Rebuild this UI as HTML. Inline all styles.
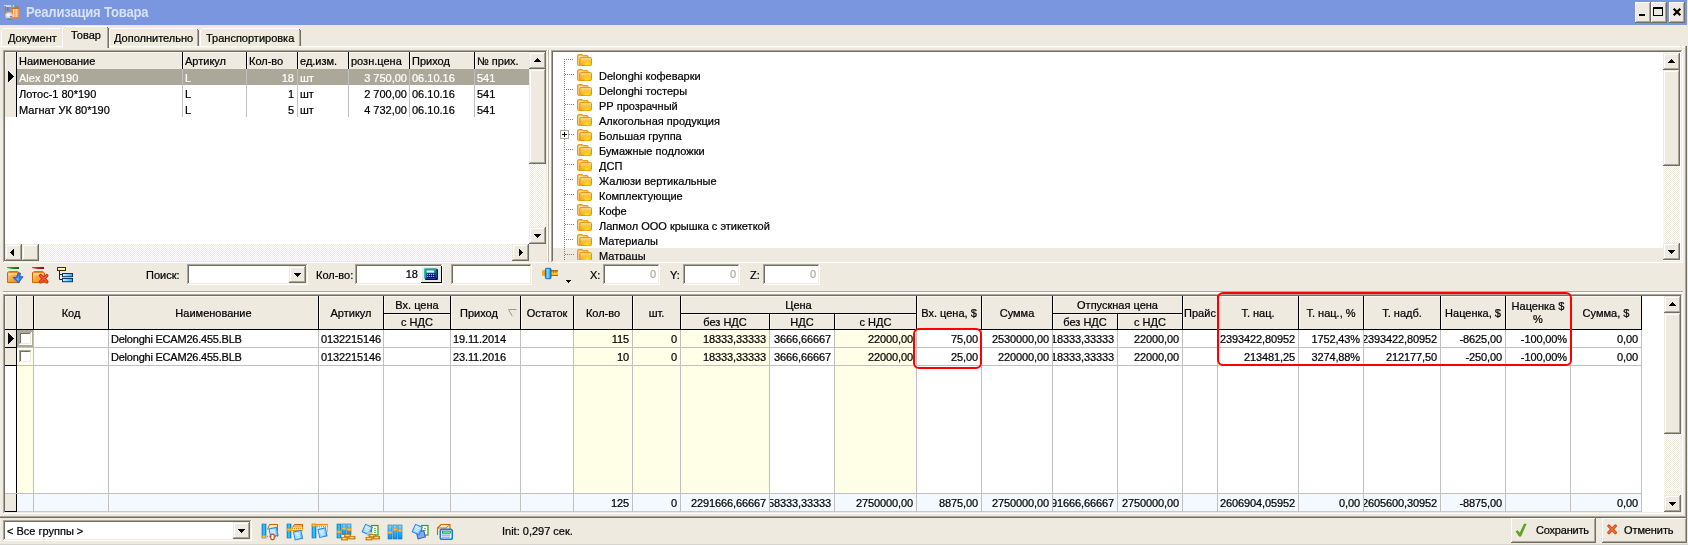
<!DOCTYPE html>
<html><head><meta charset="utf-8"><title>Реализация Товара</title>
<style>
html,body{margin:0;padding:0;}
body{width:1688px;height:545px;overflow:hidden;background:#EEEADF;position:relative;font-family:"Liberation Sans",sans-serif;font-size:11px;color:#000;}
div{position:absolute;box-sizing:border-box;}
.t{white-space:nowrap;overflow:hidden;font-size:11px;-webkit-text-stroke-width:0.22px;}
svg{position:absolute;overflow:visible;}
</style></head><body><div id="root" style="left:0;top:0;width:1688px;height:545px;will-change:transform;">

<div style="left:0px;top:0px;width:1687px;height:25px;background:#7A96DF;"></div>
<div style="left:0px;top:25px;width:1px;height:520px;background:#F3EDE8;"></div>
<svg style="left:4px;top:4px" width="16" height="16" viewBox="0 0 16 16">
<rect x="0" y="1" width="10" height="2" fill="#c8d4f4"/><rect x="7" y="1" width="2" height="2" fill="#6bc36b"/>
<rect x="0.5" y="2" width="1.5" height="7" fill="#8a8474"/><rect x="3" y="3" width="1.5" height="6" fill="#7a7868"/>
<rect x="0" y="7" width="8" height="1.5" fill="#b08a7a"/>
<rect x="11" y="2" width="4" height="2" fill="#8a8a6a"/>
<rect x="7.5" y="4" width="7.5" height="10.5" fill="#e88a30"/><rect x="9" y="5" width="1.5" height="8" fill="#f6d8b8"/><rect x="11.5" y="5" width="1.2" height="8" fill="#fbe6cf"/><rect x="13.2" y="5" width="1" height="8" fill="#c7c7d7"/>
<rect x="7.5" y="4" width="7.5" height="1" fill="#d0701c"/>
<ellipse cx="5" cy="11.5" rx="3.7" ry="3.3" fill="#d8d8d8"/><ellipse cx="4.5" cy="11" rx="2" ry="1.6" fill="#f4f4f4"/><rect x="6" y="12" width="2" height="1.5" fill="#5a86d8"/>
<rect x="3" y="14.5" width="4.5" height="1" fill="#6c6c5c"/>
</svg>
<div style="left:26px;top:4px;height:18px;line-height:18px;white-space:nowrap;font-size:13px;font-weight:bold;color:#D8E3F8;letter-spacing:-0.16px;transform:scaleY(1.06);transform-origin:0 14px;" id="ttl">Реализация Товара</div>
<div style="left:1635px;top:2px;width:16px;height:21px;background:#EEEADF;"></div>
<div style="left:1635px;top:2px;width:16px;height:1px;background:#FFFFFF;"></div>
<div style="left:1635px;top:2px;width:1px;height:21px;background:#FFFFFF;"></div>
<div style="left:1636px;top:3px;width:14px;height:1px;background:#EEEADF;"></div>
<div style="left:1636px;top:3px;width:1px;height:19px;background:#EEEADF;"></div>
<div style="left:1636px;top:21px;width:14px;height:1px;background:#ACA899;"></div>
<div style="left:1649px;top:3px;width:1px;height:19px;background:#ACA899;"></div>
<div style="left:1635px;top:22px;width:16px;height:1px;background:#716F64;"></div>
<div style="left:1650px;top:2px;width:1px;height:21px;background:#716F64;"></div>
<div style="left:1651px;top:2px;width:16px;height:21px;background:#EEEADF;"></div>
<div style="left:1651px;top:2px;width:16px;height:1px;background:#FFFFFF;"></div>
<div style="left:1651px;top:2px;width:1px;height:21px;background:#FFFFFF;"></div>
<div style="left:1652px;top:3px;width:14px;height:1px;background:#EEEADF;"></div>
<div style="left:1652px;top:3px;width:1px;height:19px;background:#EEEADF;"></div>
<div style="left:1652px;top:21px;width:14px;height:1px;background:#ACA899;"></div>
<div style="left:1665px;top:3px;width:1px;height:19px;background:#ACA899;"></div>
<div style="left:1651px;top:22px;width:16px;height:1px;background:#716F64;"></div>
<div style="left:1666px;top:2px;width:1px;height:21px;background:#716F64;"></div>
<div style="left:1669px;top:2px;width:16px;height:21px;background:#EEEADF;"></div>
<div style="left:1669px;top:2px;width:16px;height:1px;background:#FFFFFF;"></div>
<div style="left:1669px;top:2px;width:1px;height:21px;background:#FFFFFF;"></div>
<div style="left:1670px;top:3px;width:14px;height:1px;background:#EEEADF;"></div>
<div style="left:1670px;top:3px;width:1px;height:19px;background:#EEEADF;"></div>
<div style="left:1670px;top:21px;width:14px;height:1px;background:#ACA899;"></div>
<div style="left:1683px;top:3px;width:1px;height:19px;background:#ACA899;"></div>
<div style="left:1669px;top:22px;width:16px;height:1px;background:#716F64;"></div>
<div style="left:1684px;top:2px;width:1px;height:21px;background:#716F64;"></div>
<div style="left:1639px;top:14px;width:6px;height:2px;background:#000;"></div>
<div style="left:1653px;top:7px;width:10px;height:9px;border:1px solid #000;border-top:2px solid #000;"></div>
<svg style="left:1673px;top:8px" width="8" height="8" viewBox="0 0 8 8"><path d="M0.7 0.7 L7.3 7.3 M7.3 0.7 L0.7 7.3" stroke="#000" stroke-width="2.2" fill="none"/></svg>
<div style="left:0px;top:46px;width:1685px;height:1px;background:#FFFFFF;"></div>
<div style="left:0px;top:47px;width:1685px;height:1px;background:#F3F0E8;"></div>
<div style="left:1685px;top:46px;width:1px;height:472px;background:#ACA899;"></div>
<div style="left:1686px;top:46px;width:1px;height:472px;background:#716F64;"></div>
<div style="left:1px;top:28px;width:61px;height:18px;background:#EEEBDC;"></div>
<div style="left:3px;top:28px;width:57px;height:1px;background:#FFFFFF;"></div>
<div style="left:1px;top:30px;width:1px;height:16px;background:#FFFFFF;"></div>
<div style="left:2px;top:29px;width:1px;height:1px;background:#FFFFFF;"></div>
<div class="t" style="left:8px;top:31px;width:61px;height:15px;line-height:15px;text-align:left;color:#000;">Документ</div>
<div style="left:109px;top:28px;width:90px;height:18px;background:#EEEBDC;"></div>
<div style="left:111px;top:28px;width:86px;height:1px;background:#FFFFFF;"></div>
<div style="left:109px;top:30px;width:1px;height:16px;background:#FFFFFF;"></div>
<div style="left:110px;top:29px;width:1px;height:1px;background:#FFFFFF;"></div>
<div style="left:197px;top:30px;width:1px;height:16px;background:#ACA899;"></div>
<div style="left:198px;top:30px;width:1px;height:16px;background:#716F64;"></div>
<div style="left:197px;top:29px;width:1px;height:1px;background:#716F64;"></div>
<div class="t" style="left:114px;top:31px;width:90px;height:15px;line-height:15px;text-align:left;color:#000;">Дополнительно</div>
<div style="left:200px;top:28px;width:101px;height:18px;background:#EEEBDC;"></div>
<div style="left:202px;top:28px;width:97px;height:1px;background:#FFFFFF;"></div>
<div style="left:200px;top:30px;width:1px;height:16px;background:#FFFFFF;"></div>
<div style="left:201px;top:29px;width:1px;height:1px;background:#FFFFFF;"></div>
<div style="left:299px;top:30px;width:1px;height:16px;background:#ACA899;"></div>
<div style="left:300px;top:30px;width:1px;height:16px;background:#716F64;"></div>
<div style="left:299px;top:29px;width:1px;height:1px;background:#716F64;"></div>
<div class="t" style="left:206px;top:31px;width:101px;height:15px;line-height:15px;text-align:left;color:#000;">Транспортировка</div>
<div style="left:62px;top:26px;width:47px;height:22px;background:#EEEADF;"></div>
<div style="left:64px;top:26px;width:43px;height:1px;background:#FFFFFF;"></div>
<div style="left:62px;top:28px;width:1px;height:20px;background:#FFFFFF;"></div>
<div style="left:63px;top:27px;width:1px;height:1px;background:#FFFFFF;"></div>
<div style="left:107px;top:28px;width:1px;height:20px;background:#ACA899;"></div>
<div style="left:108px;top:28px;width:1px;height:20px;background:#716F64;"></div>
<div style="left:107px;top:27px;width:1px;height:1px;background:#716F64;"></div>
<div class="t" style="left:71px;top:28px;width:47px;height:15px;line-height:15px;text-align:left;color:#000;">Товар</div>
<div style="left:3px;top:50px;width:545px;height:213px;background:#fff;"></div>
<div style="left:3px;top:50px;width:545px;height:1px;background:#ACA899;"></div>
<div style="left:3px;top:50px;width:1px;height:213px;background:#ACA899;"></div>
<div style="left:4px;top:51px;width:543px;height:1px;background:#716F64;"></div>
<div style="left:4px;top:51px;width:1px;height:211px;background:#716F64;"></div>
<div style="left:3px;top:262px;width:545px;height:1px;background:#FFFFFF;"></div>
<div style="left:547px;top:50px;width:1px;height:213px;background:#FFFFFF;"></div>
<div style="left:4px;top:261px;width:543px;height:1px;background:#EEEADF;"></div>
<div style="left:546px;top:51px;width:1px;height:211px;background:#EEEADF;"></div>
<div style="left:5px;top:52px;width:524px;height:17px;background:#EEEADF;"></div>
<div style="left:5px;top:52px;width:524px;height:1px;background:#F9F7F0;"></div>
<div style="left:16px;top:52px;width:1px;height:17px;background:#000;"></div>
<div style="left:17px;top:53px;width:1px;height:15px;background:#F9F7F0;"></div>
<div style="left:182px;top:52px;width:1px;height:17px;background:#000;"></div>
<div style="left:183px;top:53px;width:1px;height:15px;background:#F9F7F0;"></div>
<div style="left:246px;top:52px;width:1px;height:17px;background:#000;"></div>
<div style="left:247px;top:53px;width:1px;height:15px;background:#F9F7F0;"></div>
<div style="left:297px;top:52px;width:1px;height:17px;background:#000;"></div>
<div style="left:298px;top:53px;width:1px;height:15px;background:#F9F7F0;"></div>
<div style="left:348px;top:52px;width:1px;height:17px;background:#000;"></div>
<div style="left:349px;top:53px;width:1px;height:15px;background:#F9F7F0;"></div>
<div style="left:409px;top:52px;width:1px;height:17px;background:#000;"></div>
<div style="left:410px;top:53px;width:1px;height:15px;background:#F9F7F0;"></div>
<div style="left:474px;top:52px;width:1px;height:17px;background:#000;"></div>
<div style="left:475px;top:53px;width:1px;height:15px;background:#F9F7F0;"></div>
<div style="left:5px;top:52px;width:1px;height:17px;background:#F9F7F0;"></div>
<div class="t" style="left:19px;top:54px;width:90px;height:15px;line-height:15px;text-align:left;color:#000;">Наименование</div>
<div class="t" style="left:185px;top:54px;width:90px;height:15px;line-height:15px;text-align:left;color:#000;">Артикул</div>
<div class="t" style="left:249px;top:54px;width:90px;height:15px;line-height:15px;text-align:left;color:#000;">Кол-во</div>
<div class="t" style="left:300px;top:54px;width:90px;height:15px;line-height:15px;text-align:left;color:#000;">ед.изм.</div>
<div class="t" style="left:351px;top:54px;width:90px;height:15px;line-height:15px;text-align:left;color:#000;">розн.цена</div>
<div class="t" style="left:412px;top:54px;width:90px;height:15px;line-height:15px;text-align:left;color:#000;">Приход</div>
<div class="t" style="left:477px;top:54px;width:90px;height:15px;line-height:15px;text-align:left;color:#000;">№ прих.</div>
<div style="left:5px;top:69px;width:11px;height:48px;background:#EEEADF;"></div>
<div style="left:16px;top:52px;width:1px;height:65px;background:#000;"></div>
<div style="left:17px;top:69px;width:512px;height:16px;background:#ACA899;"></div>
<div class="t" style="left:19px;top:70px;width:160px;height:16px;line-height:16px;text-align:left;color:#FFFFFF;">Alex 80*190</div>
<div class="t" style="left:185px;top:70px;width:60px;height:16px;line-height:16px;text-align:left;color:#FFFFFF;">L</div>
<div class="t" style="left:249px;top:70px;width:45px;height:16px;line-height:16px;text-align:right;color:#FFFFFF;">18</div>
<div class="t" style="left:300px;top:70px;width:46px;height:16px;line-height:16px;text-align:left;color:#FFFFFF;">шт</div>
<div class="t" style="left:351px;top:70px;width:56px;height:16px;line-height:16px;text-align:right;color:#FFFFFF;">3 750,00</div>
<div class="t" style="left:412px;top:70px;width:60px;height:16px;line-height:16px;text-align:left;color:#FFFFFF;">06.10.16</div>
<div class="t" style="left:477px;top:70px;width:50px;height:16px;line-height:16px;text-align:left;color:#FFFFFF;">541</div>
<div class="t" style="left:19px;top:86px;width:160px;height:16px;line-height:16px;text-align:left;color:#000;">Лотос-1 80*190</div>
<div class="t" style="left:185px;top:86px;width:60px;height:16px;line-height:16px;text-align:left;color:#000;">L</div>
<div class="t" style="left:249px;top:86px;width:45px;height:16px;line-height:16px;text-align:right;color:#000;">1</div>
<div class="t" style="left:300px;top:86px;width:46px;height:16px;line-height:16px;text-align:left;color:#000;">шт</div>
<div class="t" style="left:351px;top:86px;width:56px;height:16px;line-height:16px;text-align:right;color:#000;">2 700,00</div>
<div class="t" style="left:412px;top:86px;width:60px;height:16px;line-height:16px;text-align:left;color:#000;">06.10.16</div>
<div class="t" style="left:477px;top:86px;width:50px;height:16px;line-height:16px;text-align:left;color:#000;">541</div>
<div class="t" style="left:19px;top:102px;width:160px;height:16px;line-height:16px;text-align:left;color:#000;">Магнат УК 80*190</div>
<div class="t" style="left:185px;top:102px;width:60px;height:16px;line-height:16px;text-align:left;color:#000;">L</div>
<div class="t" style="left:249px;top:102px;width:45px;height:16px;line-height:16px;text-align:right;color:#000;">5</div>
<div class="t" style="left:300px;top:102px;width:46px;height:16px;line-height:16px;text-align:left;color:#000;">шт</div>
<div class="t" style="left:351px;top:102px;width:56px;height:16px;line-height:16px;text-align:right;color:#000;">4 732,00</div>
<div class="t" style="left:412px;top:102px;width:60px;height:16px;line-height:16px;text-align:left;color:#000;">06.10.16</div>
<div class="t" style="left:477px;top:102px;width:50px;height:16px;line-height:16px;text-align:left;color:#000;">541</div>
<div style="left:182px;top:69px;width:1px;height:48px;background:#C0C0C0;"></div>
<div style="left:246px;top:69px;width:1px;height:48px;background:#C0C0C0;"></div>
<div style="left:297px;top:69px;width:1px;height:48px;background:#C0C0C0;"></div>
<div style="left:348px;top:69px;width:1px;height:48px;background:#C0C0C0;"></div>
<div style="left:409px;top:69px;width:1px;height:48px;background:#C0C0C0;"></div>
<div style="left:474px;top:69px;width:1px;height:48px;background:#C0C0C0;"></div>
<div style="left:8px;top:71px;width:1px;height:11px;background:#000;"></div>
<div style="left:9px;top:72px;width:1px;height:9px;background:#000;"></div>
<div style="left:10px;top:73px;width:1px;height:7px;background:#000;"></div>
<div style="left:11px;top:74px;width:1px;height:5px;background:#000;"></div>
<div style="left:12px;top:75px;width:1px;height:3px;background:#000;"></div>
<div style="left:13px;top:76px;width:1px;height:1px;background:#000;"></div>
<div style="left:529px;top:52px;width:17px;height:192px;background:repeating-conic-gradient(#fff 0% 25%,#EEEADF 0% 50%) 0 0/2px 2px;"></div>
<div style="left:529px;top:52px;width:17px;height:17px;background:#EEEADF;"></div>
<div style="left:529px;top:52px;width:17px;height:1px;background:#EEEADF;"></div>
<div style="left:529px;top:52px;width:1px;height:17px;background:#EEEADF;"></div>
<div style="left:530px;top:53px;width:15px;height:1px;background:#FFFFFF;"></div>
<div style="left:530px;top:53px;width:1px;height:15px;background:#FFFFFF;"></div>
<div style="left:530px;top:67px;width:15px;height:1px;background:#ACA899;"></div>
<div style="left:544px;top:53px;width:1px;height:15px;background:#ACA899;"></div>
<div style="left:529px;top:68px;width:17px;height:1px;background:#716F64;"></div>
<div style="left:545px;top:52px;width:1px;height:17px;background:#716F64;"></div>
<div style="left:537px;top:58px;width:1px;height:1px;background:#000;"></div>
<div style="left:536px;top:59px;width:3px;height:1px;background:#000;"></div>
<div style="left:535px;top:60px;width:5px;height:1px;background:#000;"></div>
<div style="left:534px;top:61px;width:7px;height:1px;background:#000;"></div>
<div style="left:529px;top:69px;width:17px;height:95px;background:#EEEADF;"></div>
<div style="left:529px;top:69px;width:17px;height:1px;background:#EEEADF;"></div>
<div style="left:529px;top:69px;width:1px;height:95px;background:#EEEADF;"></div>
<div style="left:530px;top:70px;width:15px;height:1px;background:#FFFFFF;"></div>
<div style="left:530px;top:70px;width:1px;height:93px;background:#FFFFFF;"></div>
<div style="left:530px;top:162px;width:15px;height:1px;background:#ACA899;"></div>
<div style="left:544px;top:70px;width:1px;height:93px;background:#ACA899;"></div>
<div style="left:529px;top:163px;width:17px;height:1px;background:#716F64;"></div>
<div style="left:545px;top:69px;width:1px;height:95px;background:#716F64;"></div>
<div style="left:529px;top:227px;width:17px;height:17px;background:#EEEADF;"></div>
<div style="left:529px;top:227px;width:17px;height:1px;background:#EEEADF;"></div>
<div style="left:529px;top:227px;width:1px;height:17px;background:#EEEADF;"></div>
<div style="left:530px;top:228px;width:15px;height:1px;background:#FFFFFF;"></div>
<div style="left:530px;top:228px;width:1px;height:15px;background:#FFFFFF;"></div>
<div style="left:530px;top:242px;width:15px;height:1px;background:#ACA899;"></div>
<div style="left:544px;top:228px;width:1px;height:15px;background:#ACA899;"></div>
<div style="left:529px;top:243px;width:17px;height:1px;background:#716F64;"></div>
<div style="left:545px;top:227px;width:1px;height:17px;background:#716F64;"></div>
<div style="left:534px;top:234px;width:7px;height:1px;background:#000;"></div>
<div style="left:535px;top:235px;width:5px;height:1px;background:#000;"></div>
<div style="left:536px;top:236px;width:3px;height:1px;background:#000;"></div>
<div style="left:537px;top:237px;width:1px;height:1px;background:#000;"></div>
<div style="left:5px;top:244px;width:524px;height:17px;background:repeating-conic-gradient(#fff 0% 25%,#EEEADF 0% 50%) 0 0/2px 2px;"></div>
<div style="left:5px;top:244px;width:17px;height:17px;background:#EEEADF;"></div>
<div style="left:5px;top:244px;width:17px;height:1px;background:#EEEADF;"></div>
<div style="left:5px;top:244px;width:1px;height:17px;background:#EEEADF;"></div>
<div style="left:6px;top:245px;width:15px;height:1px;background:#FFFFFF;"></div>
<div style="left:6px;top:245px;width:1px;height:15px;background:#FFFFFF;"></div>
<div style="left:6px;top:259px;width:15px;height:1px;background:#ACA899;"></div>
<div style="left:20px;top:245px;width:1px;height:15px;background:#ACA899;"></div>
<div style="left:5px;top:260px;width:17px;height:1px;background:#716F64;"></div>
<div style="left:21px;top:244px;width:1px;height:17px;background:#716F64;"></div>
<div style="left:10px;top:252px;width:1px;height:1px;background:#000;"></div>
<div style="left:11px;top:251px;width:1px;height:3px;background:#000;"></div>
<div style="left:12px;top:250px;width:1px;height:5px;background:#000;"></div>
<div style="left:13px;top:249px;width:1px;height:7px;background:#000;"></div>
<div style="left:22px;top:244px;width:17px;height:17px;background:#EEEADF;"></div>
<div style="left:22px;top:244px;width:17px;height:1px;background:#EEEADF;"></div>
<div style="left:22px;top:244px;width:1px;height:17px;background:#EEEADF;"></div>
<div style="left:23px;top:245px;width:15px;height:1px;background:#FFFFFF;"></div>
<div style="left:23px;top:245px;width:1px;height:15px;background:#FFFFFF;"></div>
<div style="left:23px;top:259px;width:15px;height:1px;background:#ACA899;"></div>
<div style="left:37px;top:245px;width:1px;height:15px;background:#ACA899;"></div>
<div style="left:22px;top:260px;width:17px;height:1px;background:#716F64;"></div>
<div style="left:38px;top:244px;width:1px;height:17px;background:#716F64;"></div>
<div style="left:512px;top:244px;width:17px;height:17px;background:#EEEADF;"></div>
<div style="left:512px;top:244px;width:17px;height:1px;background:#EEEADF;"></div>
<div style="left:512px;top:244px;width:1px;height:17px;background:#EEEADF;"></div>
<div style="left:513px;top:245px;width:15px;height:1px;background:#FFFFFF;"></div>
<div style="left:513px;top:245px;width:1px;height:15px;background:#FFFFFF;"></div>
<div style="left:513px;top:259px;width:15px;height:1px;background:#ACA899;"></div>
<div style="left:527px;top:245px;width:1px;height:15px;background:#ACA899;"></div>
<div style="left:512px;top:260px;width:17px;height:1px;background:#716F64;"></div>
<div style="left:528px;top:244px;width:1px;height:17px;background:#716F64;"></div>
<div style="left:519px;top:249px;width:1px;height:7px;background:#000;"></div>
<div style="left:520px;top:250px;width:1px;height:5px;background:#000;"></div>
<div style="left:521px;top:251px;width:1px;height:3px;background:#000;"></div>
<div style="left:522px;top:252px;width:1px;height:1px;background:#000;"></div>
<div style="left:529px;top:244px;width:17px;height:17px;background:#EEEADF;"></div>
<div style="left:548px;top:50px;width:1px;height:212px;background:#BDB9AA;"></div>
<div style="left:549px;top:50px;width:2px;height:212px;background:#FAF9F4;"></div>
<div style="left:551px;top:50px;width:1132px;height:213px;background:#fff;"></div>
<div style="left:551px;top:50px;width:1132px;height:1px;background:#ACA899;"></div>
<div style="left:551px;top:50px;width:1px;height:213px;background:#ACA899;"></div>
<div style="left:552px;top:51px;width:1130px;height:1px;background:#716F64;"></div>
<div style="left:552px;top:51px;width:1px;height:211px;background:#716F64;"></div>
<div style="left:551px;top:262px;width:1132px;height:1px;background:#FFFFFF;"></div>
<div style="left:1682px;top:50px;width:1px;height:213px;background:#FFFFFF;"></div>
<div style="left:552px;top:261px;width:1130px;height:1px;background:#EEEADF;"></div>
<div style="left:1681px;top:51px;width:1px;height:211px;background:#EEEADF;"></div>
<div style="left:553px;top:248px;width:1110px;height:14px;background:#EEEADF;"></div>
<div style="left:1663px;top:52px;width:17px;height:210px;background:#FBFAF6;"></div>
<div style="left:1663px;top:53px;width:17px;height:190px;background:repeating-conic-gradient(#fff 0% 25%,#EEEADF 0% 50%) 0 0/2px 2px;"></div>
<div style="left:1663px;top:53px;width:17px;height:17px;background:#EEEADF;"></div>
<div style="left:1663px;top:53px;width:17px;height:1px;background:#EEEADF;"></div>
<div style="left:1663px;top:53px;width:1px;height:17px;background:#EEEADF;"></div>
<div style="left:1664px;top:54px;width:15px;height:1px;background:#FFFFFF;"></div>
<div style="left:1664px;top:54px;width:1px;height:15px;background:#FFFFFF;"></div>
<div style="left:1664px;top:68px;width:15px;height:1px;background:#ACA899;"></div>
<div style="left:1678px;top:54px;width:1px;height:15px;background:#ACA899;"></div>
<div style="left:1663px;top:69px;width:17px;height:1px;background:#716F64;"></div>
<div style="left:1679px;top:53px;width:1px;height:17px;background:#716F64;"></div>
<div style="left:1671px;top:59px;width:1px;height:1px;background:#000;"></div>
<div style="left:1670px;top:60px;width:3px;height:1px;background:#000;"></div>
<div style="left:1669px;top:61px;width:5px;height:1px;background:#000;"></div>
<div style="left:1668px;top:62px;width:7px;height:1px;background:#000;"></div>
<div style="left:1663px;top:70px;width:17px;height:96px;background:#EEEADF;"></div>
<div style="left:1663px;top:70px;width:17px;height:1px;background:#EEEADF;"></div>
<div style="left:1663px;top:70px;width:1px;height:96px;background:#EEEADF;"></div>
<div style="left:1664px;top:71px;width:15px;height:1px;background:#FFFFFF;"></div>
<div style="left:1664px;top:71px;width:1px;height:94px;background:#FFFFFF;"></div>
<div style="left:1664px;top:164px;width:15px;height:1px;background:#ACA899;"></div>
<div style="left:1678px;top:71px;width:1px;height:94px;background:#ACA899;"></div>
<div style="left:1663px;top:165px;width:17px;height:1px;background:#716F64;"></div>
<div style="left:1679px;top:70px;width:1px;height:96px;background:#716F64;"></div>
<div style="left:1663px;top:243px;width:17px;height:17px;background:#EEEADF;"></div>
<div style="left:1663px;top:243px;width:17px;height:1px;background:#EEEADF;"></div>
<div style="left:1663px;top:243px;width:1px;height:17px;background:#EEEADF;"></div>
<div style="left:1664px;top:244px;width:15px;height:1px;background:#FFFFFF;"></div>
<div style="left:1664px;top:244px;width:1px;height:15px;background:#FFFFFF;"></div>
<div style="left:1664px;top:258px;width:15px;height:1px;background:#ACA899;"></div>
<div style="left:1678px;top:244px;width:1px;height:15px;background:#ACA899;"></div>
<div style="left:1663px;top:259px;width:17px;height:1px;background:#716F64;"></div>
<div style="left:1679px;top:243px;width:1px;height:17px;background:#716F64;"></div>
<div style="left:1668px;top:250px;width:7px;height:1px;background:#000;"></div>
<div style="left:1669px;top:251px;width:5px;height:1px;background:#000;"></div>
<div style="left:1670px;top:252px;width:3px;height:1px;background:#000;"></div>
<div style="left:1671px;top:253px;width:1px;height:1px;background:#000;"></div>
<svg width="0" height="0"><defs>
<linearGradient id="fg" x1="0" y1="0" x2="0" y2="1"><stop offset="0" stop-color="#FCE2A8"/><stop offset="0.35" stop-color="#FBC64A"/><stop offset="1" stop-color="#F4A818"/></linearGradient>
<radialGradient id="fh" cx="0.62" cy="0.85" r="0.45"><stop offset="0" stop-color="#FFF000" stop-opacity="0.95"/><stop offset="1" stop-color="#FFD800" stop-opacity="0"/></radialGradient>
<g id="fold"><path d="M0.6 1.6 Q0.6 0.6 1.6 0.6 H5.4 L6.4 1.6 H10.2 Q11 1.6 11 2.4 V4.2 H3 V11.4 H1.6 Q0.6 11.4 0.6 10.4Z" fill="#F8BE50" stroke="#E6930E" stroke-width="1"/>
<path d="M1.6 2 H5.2 L6 2.8 H10 V3.4 H2.2 V10.4 H1.6Z" fill="#FCE0A6"/>
<path d="M3.8 3.6 H13.6 Q14.5 3.6 14.5 4.5 V10.5 Q14.5 11.5 13.5 11.5 H3.8 Q2.9 11.5 2.9 10.5 V4.5 Q2.9 3.6 3.8 3.6Z" fill="url(#fg)" stroke="#E6930E" stroke-width="1"/>
<path d="M3.8 3.6 H13.6 Q14.5 3.6 14.5 4.5 V10.5 Q14.5 11.5 13.5 11.5 H3.8 Q2.9 11.5 2.9 10.5 V4.5 Q2.9 3.6 3.8 3.6Z" fill="url(#fh)"/></g></defs></svg>
<div style="left:564px;top:59px;width:1px;height:203px;background:repeating-linear-gradient(to bottom,#808080 0 1px,transparent 1px 2px);"></div>
<div style="left:564px;top:59px;width:9px;height:1px;background:repeating-linear-gradient(to right,#808080 0 1px,transparent 1px 2px);"></div>
<svg style="left:577px;top:54px" width="15" height="12" viewBox="0 0 15 12"><use href="#fold"/></svg>
<div style="left:565px;top:74px;width:9px;height:1px;background:repeating-linear-gradient(to right,#808080 0 1px,transparent 1px 2px);"></div>
<svg style="left:577px;top:69px" width="15" height="12" viewBox="0 0 15 12"><use href="#fold"/></svg>
<div class="t" style="left:599px;top:69px;width:400px;height:15px;line-height:15px;text-align:left;color:#000;">Delonghi кофеварки</div>
<div style="left:564px;top:89px;width:9px;height:1px;background:repeating-linear-gradient(to right,#808080 0 1px,transparent 1px 2px);"></div>
<svg style="left:577px;top:84px" width="15" height="12" viewBox="0 0 15 12"><use href="#fold"/></svg>
<div class="t" style="left:599px;top:84px;width:400px;height:15px;line-height:15px;text-align:left;color:#000;">Delonghi тостеры</div>
<div style="left:565px;top:104px;width:9px;height:1px;background:repeating-linear-gradient(to right,#808080 0 1px,transparent 1px 2px);"></div>
<svg style="left:577px;top:99px" width="15" height="12" viewBox="0 0 15 12"><use href="#fold"/></svg>
<div class="t" style="left:599px;top:99px;width:400px;height:15px;line-height:15px;text-align:left;color:#000;">РР прозрачный</div>
<div style="left:564px;top:119px;width:9px;height:1px;background:repeating-linear-gradient(to right,#808080 0 1px,transparent 1px 2px);"></div>
<svg style="left:577px;top:114px" width="15" height="12" viewBox="0 0 15 12"><use href="#fold"/></svg>
<div class="t" style="left:599px;top:114px;width:400px;height:15px;line-height:15px;text-align:left;color:#000;">Алкогольная продукция</div>
<div style="left:565px;top:134px;width:9px;height:1px;background:repeating-linear-gradient(to right,#808080 0 1px,transparent 1px 2px);"></div>
<svg style="left:577px;top:129px" width="15" height="12" viewBox="0 0 15 12"><use href="#fold"/></svg>
<div class="t" style="left:599px;top:129px;width:400px;height:15px;line-height:15px;text-align:left;color:#000;">Большая группа</div>
<div style="left:564px;top:149px;width:9px;height:1px;background:repeating-linear-gradient(to right,#808080 0 1px,transparent 1px 2px);"></div>
<svg style="left:577px;top:144px" width="15" height="12" viewBox="0 0 15 12"><use href="#fold"/></svg>
<div class="t" style="left:599px;top:144px;width:400px;height:15px;line-height:15px;text-align:left;color:#000;">Бумажные подложки</div>
<div style="left:565px;top:164px;width:9px;height:1px;background:repeating-linear-gradient(to right,#808080 0 1px,transparent 1px 2px);"></div>
<svg style="left:577px;top:159px" width="15" height="12" viewBox="0 0 15 12"><use href="#fold"/></svg>
<div class="t" style="left:599px;top:159px;width:400px;height:15px;line-height:15px;text-align:left;color:#000;">ДСП</div>
<div style="left:564px;top:179px;width:9px;height:1px;background:repeating-linear-gradient(to right,#808080 0 1px,transparent 1px 2px);"></div>
<svg style="left:577px;top:174px" width="15" height="12" viewBox="0 0 15 12"><use href="#fold"/></svg>
<div class="t" style="left:599px;top:174px;width:400px;height:15px;line-height:15px;text-align:left;color:#000;">Жалюзи вертикальные</div>
<div style="left:565px;top:194px;width:9px;height:1px;background:repeating-linear-gradient(to right,#808080 0 1px,transparent 1px 2px);"></div>
<svg style="left:577px;top:189px" width="15" height="12" viewBox="0 0 15 12"><use href="#fold"/></svg>
<div class="t" style="left:599px;top:189px;width:400px;height:15px;line-height:15px;text-align:left;color:#000;">Комплектующие</div>
<div style="left:564px;top:209px;width:9px;height:1px;background:repeating-linear-gradient(to right,#808080 0 1px,transparent 1px 2px);"></div>
<svg style="left:577px;top:204px" width="15" height="12" viewBox="0 0 15 12"><use href="#fold"/></svg>
<div class="t" style="left:599px;top:204px;width:400px;height:15px;line-height:15px;text-align:left;color:#000;">Кофе</div>
<div style="left:565px;top:224px;width:9px;height:1px;background:repeating-linear-gradient(to right,#808080 0 1px,transparent 1px 2px);"></div>
<svg style="left:577px;top:219px" width="15" height="12" viewBox="0 0 15 12"><use href="#fold"/></svg>
<div class="t" style="left:599px;top:219px;width:400px;height:15px;line-height:15px;text-align:left;color:#000;">Лапмол ООО крышка с этикеткой</div>
<div style="left:564px;top:239px;width:9px;height:1px;background:repeating-linear-gradient(to right,#808080 0 1px,transparent 1px 2px);"></div>
<svg style="left:577px;top:234px" width="15" height="12" viewBox="0 0 15 12"><use href="#fold"/></svg>
<div class="t" style="left:599px;top:234px;width:400px;height:15px;line-height:15px;text-align:left;color:#000;">Материалы</div>
<div style="left:565px;top:254px;width:9px;height:1px;background:repeating-linear-gradient(to right,#808080 0 1px,transparent 1px 2px);"></div>
<svg style="left:577px;top:249px" width="15" height="12" viewBox="0 0 15 12"><use href="#fold"/></svg>
<div class="t" style="left:599px;top:249px;width:400px;height:15px;line-height:15px;text-align:left;color:#000;">Матрацы</div>
<div style="left:560px;top:130px;width:9px;height:9px;background:#fff;border:1px solid #ACA899;"></div>
<div style="left:562px;top:134px;width:5px;height:1px;background:#000;"></div>
<div style="left:564px;top:132px;width:1px;height:5px;background:#000;"></div>
<div style="left:553px;top:260px;width:1110px;height:2px;background:#EEEADF;"></div>
<div style="left:553px;top:262px;width:1128px;height:2px;"></div>
<div style="left:552px;top:261px;width:1130px;height:1px;background:#EEEADF;"></div>
<div style="left:551px;top:262px;width:1132px;height:1px;background:#FFFFFF;"></div>
<div style="left:0px;top:263px;width:1685px;height:28px;background:#EEEADF;"></div>
<div class="t" style="left:146px;top:268px;width:40px;height:15px;line-height:15px;text-align:left;color:#000;">Поиск:</div>
<div style="left:187px;top:264px;width:121px;height:21px;background:#fff;"></div>
<div style="left:187px;top:264px;width:121px;height:1px;background:#ACA899;"></div>
<div style="left:187px;top:264px;width:1px;height:21px;background:#ACA899;"></div>
<div style="left:188px;top:265px;width:119px;height:1px;background:#716F64;"></div>
<div style="left:188px;top:265px;width:1px;height:19px;background:#716F64;"></div>
<div style="left:187px;top:284px;width:121px;height:1px;background:#FFFFFF;"></div>
<div style="left:307px;top:264px;width:1px;height:21px;background:#FFFFFF;"></div>
<div style="left:188px;top:283px;width:119px;height:1px;background:#EEEADF;"></div>
<div style="left:306px;top:265px;width:1px;height:19px;background:#EEEADF;"></div>
<div style="left:289px;top:266px;width:17px;height:17px;background:#EEEADF;"></div>
<div style="left:289px;top:266px;width:17px;height:1px;background:#EEEADF;"></div>
<div style="left:289px;top:266px;width:1px;height:17px;background:#EEEADF;"></div>
<div style="left:290px;top:267px;width:15px;height:1px;background:#FFFFFF;"></div>
<div style="left:290px;top:267px;width:1px;height:15px;background:#FFFFFF;"></div>
<div style="left:290px;top:281px;width:15px;height:1px;background:#ACA899;"></div>
<div style="left:304px;top:267px;width:1px;height:15px;background:#ACA899;"></div>
<div style="left:289px;top:282px;width:17px;height:1px;background:#716F64;"></div>
<div style="left:305px;top:266px;width:1px;height:17px;background:#716F64;"></div>
<div style="left:294px;top:273px;width:7px;height:1px;background:#000;"></div>
<div style="left:295px;top:274px;width:5px;height:1px;background:#000;"></div>
<div style="left:296px;top:275px;width:3px;height:1px;background:#000;"></div>
<div style="left:297px;top:276px;width:1px;height:1px;background:#000;"></div>
<div class="t" style="left:316px;top:268px;width:40px;height:15px;line-height:15px;text-align:left;color:#000;">Кол-во:</div>
<div style="left:355px;top:264px;width:88px;height:21px;background:#fff;"></div>
<div style="left:355px;top:264px;width:88px;height:1px;background:#ACA899;"></div>
<div style="left:355px;top:264px;width:1px;height:21px;background:#ACA899;"></div>
<div style="left:356px;top:265px;width:86px;height:1px;background:#716F64;"></div>
<div style="left:356px;top:265px;width:1px;height:19px;background:#716F64;"></div>
<div style="left:355px;top:284px;width:88px;height:1px;background:#FFFFFF;"></div>
<div style="left:442px;top:264px;width:1px;height:21px;background:#FFFFFF;"></div>
<div style="left:356px;top:283px;width:86px;height:1px;background:#EEEADF;"></div>
<div style="left:441px;top:265px;width:1px;height:19px;background:#EEEADF;"></div>
<div class="t" style="left:357px;top:267px;width:61px;height:15px;line-height:15px;text-align:right;color:#000;">18</div>
<div style="left:421px;top:266px;width:21px;height:17px;background:#EEEADF;"></div>
<div style="left:421px;top:266px;width:21px;height:1px;background:#FFFFFF;"></div>
<div style="left:421px;top:266px;width:1px;height:17px;background:#FFFFFF;"></div>
<div style="left:421px;top:282px;width:21px;height:1px;background:#000;"></div>
<div style="left:441px;top:266px;width:1px;height:17px;background:#000;"></div>
<svg style="left:424px;top:268px" width="14" height="12" viewBox="0 0 14 12"><rect x="1" y="1" width="13" height="11" rx="1" fill="#000078"/><rect x="0" y="0" width="12.6" height="10.6" rx="0.8" fill="#008C8C"/><path d="M0.5 0.8 H12" stroke="#E8FFFF" stroke-width="1" stroke-dasharray="1 1"/><path d="M0.8 0.5 V10" stroke="#7CFFFF" stroke-width="1.2" stroke-dasharray="1 1"/><rect x="2.6" y="2.4" width="7.6" height="2.2" fill="#FBF4F4"/><rect x="2.6" y="5.4" width="9.4" height="4.6" fill="#000080"/><path d="M3.2 6.4 H11.5 M3.2 8.4 H11.5" stroke="#fff" stroke-width="1" stroke-dasharray="1 1"/></svg>
<div style="left:451px;top:264px;width:81px;height:21px;background:#fff;"></div>
<div style="left:451px;top:264px;width:81px;height:1px;background:#ACA899;"></div>
<div style="left:451px;top:264px;width:1px;height:21px;background:#ACA899;"></div>
<div style="left:452px;top:265px;width:79px;height:1px;background:#716F64;"></div>
<div style="left:452px;top:265px;width:1px;height:19px;background:#716F64;"></div>
<div style="left:451px;top:284px;width:81px;height:1px;background:#FFFFFF;"></div>
<div style="left:531px;top:264px;width:1px;height:21px;background:#FFFFFF;"></div>
<div style="left:452px;top:283px;width:79px;height:1px;background:#EEEADF;"></div>
<div style="left:530px;top:265px;width:1px;height:19px;background:#EEEADF;"></div>
<svg style="left:541px;top:267px" width="18" height="14" viewBox="0 0 18 14"><defs><linearGradient id="rb" x1="0" y1="0" x2="1" y2="0"><stop offset="0" stop-color="#1C8CE0"/><stop offset="0.4" stop-color="#8CD4FF"/><stop offset="0.7" stop-color="#28C0F8"/><stop offset="1" stop-color="#1070C8"/></linearGradient></defs><rect x="1" y="3.2" width="3.6" height="5.6" fill="#F6A418"/><rect x="1" y="3.2" width="3.6" height="1" fill="#F8B848"/><rect x="10" y="3.2" width="7" height="5.8" fill="#FAC21C"/><rect x="10" y="3.2" width="7" height="1.1" fill="#9A5200"/><rect x="10" y="8" width="7" height="1" fill="#B46A00"/><rect x="12" y="4.4" width="1" height="1.2" fill="#7A5A20"/><rect x="14.4" y="4.4" width="1" height="1.2" fill="#7A5A20"/><rect x="4.4" y="1.3" width="5.6" height="10.4" rx="0.9" fill="url(#rb)" stroke="#0C64B8" stroke-width="0.9"/></svg>
<div style="left:566px;top:280px;width:5px;height:1px;background:#000;"></div>
<div style="left:567px;top:281px;width:3px;height:1px;background:#000;"></div>
<div style="left:568px;top:282px;width:1px;height:1px;background:#000;"></div>
<div class="t" style="left:590px;top:268px;width:14px;height:15px;line-height:15px;text-align:left;color:#000;">X:</div>
<div style="left:603px;top:264px;width:57px;height:21px;background:#fff;"></div>
<div style="left:603px;top:264px;width:57px;height:1px;background:#ACA899;"></div>
<div style="left:603px;top:264px;width:1px;height:21px;background:#ACA899;"></div>
<div style="left:604px;top:265px;width:55px;height:1px;background:#716F64;"></div>
<div style="left:604px;top:265px;width:1px;height:19px;background:#716F64;"></div>
<div style="left:603px;top:284px;width:57px;height:1px;background:#FFFFFF;"></div>
<div style="left:659px;top:264px;width:1px;height:21px;background:#FFFFFF;"></div>
<div style="left:604px;top:283px;width:55px;height:1px;background:#EEEADF;"></div>
<div style="left:658px;top:265px;width:1px;height:19px;background:#EEEADF;"></div>
<div class="t" style="left:603px;top:267px;width:53px;height:15px;line-height:15px;text-align:right;color:#ACA899;">0</div>
<div class="t" style="left:670px;top:268px;width:14px;height:15px;line-height:15px;text-align:left;color:#000;">Y:</div>
<div style="left:683px;top:264px;width:57px;height:21px;background:#fff;"></div>
<div style="left:683px;top:264px;width:57px;height:1px;background:#ACA899;"></div>
<div style="left:683px;top:264px;width:1px;height:21px;background:#ACA899;"></div>
<div style="left:684px;top:265px;width:55px;height:1px;background:#716F64;"></div>
<div style="left:684px;top:265px;width:1px;height:19px;background:#716F64;"></div>
<div style="left:683px;top:284px;width:57px;height:1px;background:#FFFFFF;"></div>
<div style="left:739px;top:264px;width:1px;height:21px;background:#FFFFFF;"></div>
<div style="left:684px;top:283px;width:55px;height:1px;background:#EEEADF;"></div>
<div style="left:738px;top:265px;width:1px;height:19px;background:#EEEADF;"></div>
<div class="t" style="left:683px;top:267px;width:53px;height:15px;line-height:15px;text-align:right;color:#ACA899;">0</div>
<div class="t" style="left:750px;top:268px;width:14px;height:15px;line-height:15px;text-align:left;color:#000;">Z:</div>
<div style="left:763px;top:264px;width:57px;height:21px;background:#fff;"></div>
<div style="left:763px;top:264px;width:57px;height:1px;background:#ACA899;"></div>
<div style="left:763px;top:264px;width:1px;height:21px;background:#ACA899;"></div>
<div style="left:764px;top:265px;width:55px;height:1px;background:#716F64;"></div>
<div style="left:764px;top:265px;width:1px;height:19px;background:#716F64;"></div>
<div style="left:763px;top:284px;width:57px;height:1px;background:#FFFFFF;"></div>
<div style="left:819px;top:264px;width:1px;height:21px;background:#FFFFFF;"></div>
<div style="left:764px;top:283px;width:55px;height:1px;background:#EEEADF;"></div>
<div style="left:818px;top:265px;width:1px;height:19px;background:#EEEADF;"></div>
<div class="t" style="left:763px;top:267px;width:53px;height:15px;line-height:15px;text-align:right;color:#ACA899;">0</div>
<svg width="0" height="0"><defs>
<linearGradient id="bx" x1="0" y1="0" x2="1" y2="1"><stop offset="0" stop-color="#FBD9A8"/><stop offset="0.5" stop-color="#F5A53C"/><stop offset="1" stop-color="#F08C10"/></linearGradient>
<linearGradient id="gl" x1="0" y1="0" x2="1" y2="0"><stop offset="0" stop-color="#20C020"/><stop offset="1" stop-color="#0A6A0A"/></linearGradient>
<linearGradient id="rl" x1="0" y1="0" x2="1" y2="0"><stop offset="0" stop-color="#FF3A18"/><stop offset="1" stop-color="#8A0A00"/></linearGradient>
<linearGradient id="bb" x1="0" y1="0" x2="1" y2="0"><stop offset="0" stop-color="#C8F4FF"/><stop offset="1" stop-color="#38A4F0"/></linearGradient>
<g id="pbox"><path d="M0.5 5.5 L2.5 4.5 H10.5 L12.5 6 V15.5 H0.5Z" fill="url(#bx)" stroke="#C86A08" stroke-width="1"/><path d="M2.5 4.8 H10.5 L12 6.3 H1Z" fill="#E88A1C"/><path d="M1.5 7 H11.5" stroke="#FCE2BC" stroke-width="1"/></g>
</defs></svg>
<svg style="left:7px;top:267px" width="17" height="17" viewBox="0 0 17 17">
<path d="M0 0 H12 V2 H5 L0 1Z" fill="url(#gl)"/><use href="#pbox"/>
<path d="M11 6 L13.5 6.2 L12.8 9.6 L16 9.8 L11.5 15.8 L6.2 10.6 L9.6 10.4Z" fill="#3A7CF0" stroke="#1C48C8" stroke-width="0.8"/><path d="M11.6 8 L11 11.5 L9 11.6 L11.4 14Z" fill="#6CD0FF"/></svg>
<svg style="left:32px;top:267px" width="17" height="17" viewBox="0 0 17 17">
<path d="M0 0 H12 V2 H5 L0 1Z" fill="url(#rl)"/><use href="#pbox"/>
<path d="M8.6 8.6 L14.8 14.8 M14.8 8.6 L8.6 14.8" stroke="#C83018" stroke-width="3.4" stroke-linecap="round"/><path d="M8.8 8.8 L14.6 14.6 M14.6 8.8 L8.8 14.6" stroke="#F0583C" stroke-width="1.6" stroke-linecap="round"/></svg>
<svg style="left:57px;top:267px" width="17" height="17" viewBox="0 0 17 17">
<rect x="0.5" y="0.5" width="8" height="3" fill="#FFF25A" stroke="#3C3000" stroke-width="1"/><rect x="1.5" y="1" width="6" height="1" fill="#FFFBC8"/>
<path d="M2.5 4 V12.5 H5.5 M2.5 7.5 H5.5" stroke="#2A2400" stroke-width="1" fill="none"/>
<rect x="5.5" y="6.5" width="10" height="3.2" fill="url(#bb)" stroke="#063868" stroke-width="1"/><rect x="5.5" y="11.5" width="10" height="3.2" fill="url(#bb)" stroke="#063868" stroke-width="1"/></svg>
<div style="left:3px;top:291px;width:1680px;height:1px;background:#ACA899;"></div>
<div style="left:3px;top:292px;width:1680px;height:1px;background:#FFFFFF;"></div>
<div style="left:3px;top:293px;width:1680px;height:1px;background:#FBFAF4;"></div>
<div style="left:3px;top:294px;width:1680px;height:220px;background:#fff;"></div>
<div style="left:3px;top:294px;width:1680px;height:1px;background:#ACA899;"></div>
<div style="left:3px;top:294px;width:1px;height:220px;background:#ACA899;"></div>
<div style="left:4px;top:295px;width:1678px;height:1px;background:#716F64;"></div>
<div style="left:4px;top:295px;width:1px;height:218px;background:#716F64;"></div>
<div style="left:3px;top:513px;width:1680px;height:1px;background:#FFFFFF;"></div>
<div style="left:1682px;top:294px;width:1px;height:220px;background:#FFFFFF;"></div>
<div style="left:4px;top:512px;width:1678px;height:1px;background:#EEEADF;"></div>
<div style="left:1681px;top:295px;width:1px;height:218px;background:#EEEADF;"></div>
<div style="left:5px;top:296px;width:1637px;height:33px;background:#EEEADF;"></div>
<div style="left:5px;top:329px;width:1637px;height:1px;background:#000;"></div>
<div style="left:5px;top:296px;width:1637px;height:1px;background:#F9F7F0;"></div>
<div style="left:16px;top:296px;width:1px;height:34px;background:#000;"></div>
<div style="left:17px;top:296px;width:1px;height:33px;background:#F9F7F0;"></div>
<div style="left:33px;top:296px;width:1px;height:34px;background:#000;"></div>
<div style="left:34px;top:296px;width:1px;height:33px;background:#F9F7F0;"></div>
<div style="left:108px;top:296px;width:1px;height:34px;background:#000;"></div>
<div style="left:109px;top:296px;width:1px;height:33px;background:#F9F7F0;"></div>
<div style="left:318px;top:296px;width:1px;height:34px;background:#000;"></div>
<div style="left:319px;top:296px;width:1px;height:33px;background:#F9F7F0;"></div>
<div style="left:383px;top:296px;width:1px;height:34px;background:#000;"></div>
<div style="left:384px;top:296px;width:1px;height:33px;background:#F9F7F0;"></div>
<div style="left:450px;top:296px;width:1px;height:34px;background:#000;"></div>
<div style="left:451px;top:296px;width:1px;height:33px;background:#F9F7F0;"></div>
<div style="left:520px;top:296px;width:1px;height:34px;background:#000;"></div>
<div style="left:521px;top:296px;width:1px;height:33px;background:#F9F7F0;"></div>
<div style="left:573px;top:296px;width:1px;height:34px;background:#000;"></div>
<div style="left:574px;top:296px;width:1px;height:33px;background:#F9F7F0;"></div>
<div style="left:632px;top:296px;width:1px;height:34px;background:#000;"></div>
<div style="left:633px;top:296px;width:1px;height:33px;background:#F9F7F0;"></div>
<div style="left:680px;top:296px;width:1px;height:34px;background:#000;"></div>
<div style="left:681px;top:296px;width:1px;height:33px;background:#F9F7F0;"></div>
<div style="left:769px;top:296px;width:1px;height:34px;background:#000;"></div>
<div style="left:770px;top:296px;width:1px;height:33px;background:#F9F7F0;"></div>
<div style="left:834px;top:296px;width:1px;height:34px;background:#000;"></div>
<div style="left:835px;top:296px;width:1px;height:33px;background:#F9F7F0;"></div>
<div style="left:916px;top:296px;width:1px;height:34px;background:#000;"></div>
<div style="left:917px;top:296px;width:1px;height:33px;background:#F9F7F0;"></div>
<div style="left:981px;top:296px;width:1px;height:34px;background:#000;"></div>
<div style="left:982px;top:296px;width:1px;height:33px;background:#F9F7F0;"></div>
<div style="left:1052px;top:296px;width:1px;height:34px;background:#000;"></div>
<div style="left:1053px;top:296px;width:1px;height:33px;background:#F9F7F0;"></div>
<div style="left:1117px;top:296px;width:1px;height:34px;background:#000;"></div>
<div style="left:1118px;top:296px;width:1px;height:33px;background:#F9F7F0;"></div>
<div style="left:1182px;top:296px;width:1px;height:34px;background:#000;"></div>
<div style="left:1183px;top:296px;width:1px;height:33px;background:#F9F7F0;"></div>
<div style="left:1217px;top:296px;width:1px;height:34px;background:#000;"></div>
<div style="left:1218px;top:296px;width:1px;height:33px;background:#F9F7F0;"></div>
<div style="left:1298px;top:296px;width:1px;height:34px;background:#000;"></div>
<div style="left:1299px;top:296px;width:1px;height:33px;background:#F9F7F0;"></div>
<div style="left:1363px;top:296px;width:1px;height:34px;background:#000;"></div>
<div style="left:1364px;top:296px;width:1px;height:33px;background:#F9F7F0;"></div>
<div style="left:1440px;top:296px;width:1px;height:34px;background:#000;"></div>
<div style="left:1441px;top:296px;width:1px;height:33px;background:#F9F7F0;"></div>
<div style="left:1505px;top:296px;width:1px;height:34px;background:#000;"></div>
<div style="left:1506px;top:296px;width:1px;height:33px;background:#F9F7F0;"></div>
<div style="left:1570px;top:296px;width:1px;height:34px;background:#000;"></div>
<div style="left:1571px;top:296px;width:1px;height:33px;background:#F9F7F0;"></div>
<div style="left:1641px;top:296px;width:1px;height:34px;background:#000;"></div>
<div style="left:1642px;top:296px;width:1px;height:33px;background:#F9F7F0;"></div>
<div style="left:5px;top:296px;width:1px;height:33px;background:#F9F7F0;"></div>
<div style="left:384px;top:296px;width:66px;height:17px;background:#EEEADF;"></div>
<div style="left:384px;top:296px;width:66px;height:1px;background:#F9F7F0;"></div>
<div style="left:384px;top:296px;width:1px;height:17px;background:#F9F7F0;"></div>
<div style="left:384px;top:313px;width:66px;height:1px;background:#000;"></div>
<div style="left:384px;top:314px;width:66px;height:1px;background:#F9F7F0;"></div>
<div class="t" style="left:384px;top:297px;width:66px;height:16px;line-height:16px;text-align:center;color:#000;">Вх. цена</div>
<div class="t" style="left:384px;top:314px;width:66px;height:16px;line-height:16px;text-align:center;color:#000;">с НДС</div>
<div style="left:681px;top:296px;width:235px;height:17px;background:#EEEADF;"></div>
<div style="left:681px;top:296px;width:235px;height:1px;background:#F9F7F0;"></div>
<div style="left:681px;top:296px;width:1px;height:17px;background:#F9F7F0;"></div>
<div style="left:681px;top:313px;width:235px;height:1px;background:#000;"></div>
<div style="left:681px;top:314px;width:235px;height:1px;background:#F9F7F0;"></div>
<div class="t" style="left:681px;top:297px;width:235px;height:16px;line-height:16px;text-align:center;color:#000;">Цена</div>
<div class="t" style="left:681px;top:314px;width:88px;height:16px;line-height:16px;text-align:center;color:#000;">без НДС</div>
<div class="t" style="left:770px;top:314px;width:64px;height:16px;line-height:16px;text-align:center;color:#000;">НДС</div>
<div style="left:769px;top:314px;width:1px;height:1px;background:#000;"></div>
<div class="t" style="left:835px;top:314px;width:81px;height:16px;line-height:16px;text-align:center;color:#000;">с НДС</div>
<div style="left:834px;top:314px;width:1px;height:1px;background:#000;"></div>
<div style="left:1053px;top:296px;width:129px;height:17px;background:#EEEADF;"></div>
<div style="left:1053px;top:296px;width:129px;height:1px;background:#F9F7F0;"></div>
<div style="left:1053px;top:296px;width:1px;height:17px;background:#F9F7F0;"></div>
<div style="left:1053px;top:313px;width:129px;height:1px;background:#000;"></div>
<div style="left:1053px;top:314px;width:129px;height:1px;background:#F9F7F0;"></div>
<div class="t" style="left:1053px;top:297px;width:129px;height:16px;line-height:16px;text-align:center;color:#000;">Отпускная цена</div>
<div class="t" style="left:1053px;top:314px;width:64px;height:16px;line-height:16px;text-align:center;color:#000;">без НДС</div>
<div class="t" style="left:1118px;top:314px;width:64px;height:16px;line-height:16px;text-align:center;color:#000;">с НДС</div>
<div style="left:1117px;top:314px;width:1px;height:1px;background:#000;"></div>
<div class="t" style="left:34px;top:305px;width:74px;height:16px;line-height:16px;text-align:center;color:#000;">Код</div>
<div class="t" style="left:109px;top:305px;width:209px;height:16px;line-height:16px;text-align:center;color:#000;">Наименование</div>
<div class="t" style="left:319px;top:305px;width:64px;height:16px;line-height:16px;text-align:center;color:#000;">Артикул</div>
<div class="t" style="left:521px;top:305px;width:52px;height:16px;line-height:16px;text-align:center;color:#000;">Остаток</div>
<div class="t" style="left:574px;top:305px;width:58px;height:16px;line-height:16px;text-align:center;color:#000;">Кол-во</div>
<div class="t" style="left:633px;top:305px;width:47px;height:16px;line-height:16px;text-align:center;color:#000;">шт.</div>
<div class="t" style="left:917px;top:305px;width:64px;height:16px;line-height:16px;text-align:center;color:#000;">Вх. цена, $</div>
<div class="t" style="left:982px;top:305px;width:70px;height:16px;line-height:16px;text-align:center;color:#000;">Сумма</div>
<div class="t" style="left:1183px;top:305px;width:34px;height:16px;line-height:16px;text-align:center;color:#000;">Прайс</div>
<div class="t" style="left:1218px;top:305px;width:80px;height:16px;line-height:16px;text-align:center;color:#000;">Т. нац.</div>
<div class="t" style="left:1299px;top:305px;width:64px;height:16px;line-height:16px;text-align:center;color:#000;">Т. нац., %</div>
<div class="t" style="left:1364px;top:305px;width:76px;height:16px;line-height:16px;text-align:center;color:#000;">Т. надб.</div>
<div class="t" style="left:1441px;top:305px;width:64px;height:16px;line-height:16px;text-align:center;color:#000;">Наценка, $</div>
<div class="t" style="left:1571px;top:305px;width:70px;height:16px;line-height:16px;text-align:center;color:#000;">Сумма, $</div>
<div class="t" style="left:451px;top:305px;width:69px;height:16px;line-height:16px;text-align:left;color:#000;padding-left:9px;">Приход</div>
<svg style="left:508px;top:309px" width="9" height="8" viewBox="0 0 9 8"><path d="M0.5 0.5 H8.5 L4.5 7.5Z" fill="none" stroke="#9C9888" stroke-width="1"/><path d="M8.5 0.5 L4.5 7.5" stroke="#fff" stroke-width="1"/></svg>
<div class="t" style="left:1506px;top:300px;width:64px;height:13px;line-height:13px;text-align:center;color:#000;">Наценка $</div>
<div class="t" style="left:1506px;top:313px;width:64px;height:13px;line-height:13px;text-align:center;color:#000;">%</div>
<div style="left:17px;top:330px;width:16px;height:164px;background:#FFFFE8;"></div>
<div style="left:574px;top:330px;width:58px;height:164px;background:#FFFFE8;"></div>
<div style="left:633px;top:330px;width:47px;height:164px;background:#FFFFE8;"></div>
<div style="left:681px;top:330px;width:88px;height:164px;background:#FFFFE8;"></div>
<div style="left:835px;top:330px;width:81px;height:164px;background:#FFFFE8;"></div>
<div style="left:5px;top:330px;width:11px;height:36px;background:#EEEADF;"></div>
<div style="left:5px;top:366px;width:11px;height:128px;background:#fff;"></div>
<div style="left:5px;top:347px;width:11px;height:1px;background:#000;"></div>
<div style="left:5px;top:365px;width:11px;height:1px;background:#000;"></div>
<div style="left:16px;top:330px;width:1px;height:182px;background:#000;"></div>
<div style="left:17px;top:347px;width:1625px;height:1px;background:#C0C0C0;"></div>
<div style="left:17px;top:365px;width:1625px;height:1px;background:#C0C0C0;"></div>
<div style="left:33px;top:330px;width:1px;height:164px;background:#C0C0C0;"></div>
<div style="left:108px;top:330px;width:1px;height:164px;background:#C0C0C0;"></div>
<div style="left:318px;top:330px;width:1px;height:164px;background:#C0C0C0;"></div>
<div style="left:383px;top:330px;width:1px;height:164px;background:#C0C0C0;"></div>
<div style="left:450px;top:330px;width:1px;height:164px;background:#C0C0C0;"></div>
<div style="left:520px;top:330px;width:1px;height:164px;background:#C0C0C0;"></div>
<div style="left:573px;top:330px;width:1px;height:164px;background:#C0C0C0;"></div>
<div style="left:632px;top:330px;width:1px;height:164px;background:#C0C0C0;"></div>
<div style="left:680px;top:330px;width:1px;height:164px;background:#C0C0C0;"></div>
<div style="left:769px;top:330px;width:1px;height:164px;background:#C0C0C0;"></div>
<div style="left:834px;top:330px;width:1px;height:164px;background:#C0C0C0;"></div>
<div style="left:916px;top:330px;width:1px;height:164px;background:#C0C0C0;"></div>
<div style="left:981px;top:330px;width:1px;height:164px;background:#C0C0C0;"></div>
<div style="left:1052px;top:330px;width:1px;height:164px;background:#C0C0C0;"></div>
<div style="left:1117px;top:330px;width:1px;height:164px;background:#C0C0C0;"></div>
<div style="left:1182px;top:330px;width:1px;height:164px;background:#C0C0C0;"></div>
<div style="left:1217px;top:330px;width:1px;height:164px;background:#C0C0C0;"></div>
<div style="left:1298px;top:330px;width:1px;height:164px;background:#C0C0C0;"></div>
<div style="left:1363px;top:330px;width:1px;height:164px;background:#C0C0C0;"></div>
<div style="left:1440px;top:330px;width:1px;height:164px;background:#C0C0C0;"></div>
<div style="left:1505px;top:330px;width:1px;height:164px;background:#C0C0C0;"></div>
<div style="left:1570px;top:330px;width:1px;height:164px;background:#C0C0C0;"></div>
<div style="left:1641px;top:330px;width:1px;height:164px;background:#C0C0C0;"></div>
<div style="left:8px;top:333px;width:1px;height:11px;background:#000;"></div>
<div style="left:9px;top:334px;width:1px;height:9px;background:#000;"></div>
<div style="left:10px;top:335px;width:1px;height:7px;background:#000;"></div>
<div style="left:11px;top:336px;width:1px;height:5px;background:#000;"></div>
<div style="left:12px;top:337px;width:1px;height:3px;background:#000;"></div>
<div style="left:13px;top:338px;width:1px;height:1px;background:#000;"></div>
<div style="left:17px;top:330px;width:16px;height:17px;background:#ACA899;"></div>
<div style="left:19px;top:332px;width:13px;height:13px;background:#fff;"></div>
<div style="left:19px;top:332px;width:13px;height:1px;background:#ACA899;"></div>
<div style="left:19px;top:332px;width:1px;height:13px;background:#ACA899;"></div>
<div style="left:20px;top:333px;width:11px;height:1px;background:#716F64;"></div>
<div style="left:20px;top:333px;width:1px;height:11px;background:#716F64;"></div>
<div style="left:19px;top:344px;width:13px;height:1px;background:#FFFFFF;"></div>
<div style="left:31px;top:332px;width:1px;height:13px;background:#FFFFFF;"></div>
<div style="left:20px;top:343px;width:11px;height:1px;background:#EEEADF;"></div>
<div style="left:30px;top:333px;width:1px;height:11px;background:#EEEADF;"></div>
<div style="left:19px;top:350px;width:13px;height:13px;background:#fff;"></div>
<div style="left:19px;top:350px;width:13px;height:1px;background:#ACA899;"></div>
<div style="left:19px;top:350px;width:1px;height:13px;background:#ACA899;"></div>
<div style="left:20px;top:351px;width:11px;height:1px;background:#716F64;"></div>
<div style="left:20px;top:351px;width:1px;height:11px;background:#716F64;"></div>
<div style="left:19px;top:362px;width:13px;height:1px;background:#FFFFFF;"></div>
<div style="left:31px;top:350px;width:1px;height:13px;background:#FFFFFF;"></div>
<div style="left:20px;top:361px;width:11px;height:1px;background:#EEEADF;"></div>
<div style="left:30px;top:351px;width:1px;height:11px;background:#EEEADF;"></div>
<div class="t" style="left:111px;top:331px;width:205px;height:17px;line-height:17px;text-align:left;color:#000;letter-spacing:-0.22px;">Delonghi ECAM26.455.BLB</div>
<div class="t" style="left:321px;top:331px;width:62px;height:17px;line-height:17px;text-align:left;color:#000;letter-spacing:-0.12px;">0132215146</div>
<div class="t" style="left:453px;top:331px;width:66px;height:17px;line-height:17px;text-align:left;color:#000;letter-spacing:-0.12px;">19.11.2014</div>
<div class="t" style="left:574px;top:331px;width:58px;height:17px;line-height:17px;color:#000;letter-spacing:-0.12px"><span style="position:absolute;right:3px;top:0">115</span></div>
<div class="t" style="left:633px;top:331px;width:47px;height:17px;line-height:17px;color:#000;letter-spacing:-0.12px"><span style="position:absolute;right:3px;top:0">0</span></div>
<div class="t" style="left:681px;top:331px;width:88px;height:17px;line-height:17px;color:#000;letter-spacing:-0.12px"><span style="position:absolute;right:3px;top:0">18333,33333</span></div>
<div class="t" style="left:770px;top:331px;width:64px;height:17px;line-height:17px;color:#000;letter-spacing:-0.12px"><span style="position:absolute;right:3px;top:0">3666,66667</span></div>
<div class="t" style="left:835px;top:331px;width:81px;height:17px;line-height:17px;color:#000;letter-spacing:-0.12px"><span style="position:absolute;right:3px;top:0">22000,00</span></div>
<div class="t" style="left:917px;top:331px;width:64px;height:17px;line-height:17px;color:#000;letter-spacing:-0.12px"><span style="position:absolute;right:3px;top:0">75,00</span></div>
<div class="t" style="left:982px;top:331px;width:70px;height:17px;line-height:17px;color:#000;letter-spacing:-0.12px"><span style="position:absolute;right:3px;top:0">2530000,00</span></div>
<div class="t" style="left:1053px;top:331px;width:64px;height:17px;line-height:17px;color:#000;letter-spacing:-0.12px"><span style="position:absolute;right:3px;top:0">18333,33333</span></div>
<div class="t" style="left:1118px;top:331px;width:64px;height:17px;line-height:17px;color:#000;letter-spacing:-0.12px"><span style="position:absolute;right:3px;top:0">22000,00</span></div>
<div class="t" style="left:1218px;top:331px;width:80px;height:17px;line-height:17px;color:#000;letter-spacing:-0.12px"><span style="position:absolute;right:3px;top:0">2393422,80952</span></div>
<div class="t" style="left:1299px;top:331px;width:64px;height:17px;line-height:17px;color:#000;letter-spacing:-0.12px"><span style="position:absolute;right:3px;top:0">1752,43%</span></div>
<div class="t" style="left:1364px;top:331px;width:76px;height:17px;line-height:17px;color:#000;letter-spacing:-0.12px"><span style="position:absolute;right:3px;top:0">2393422,80952</span></div>
<div class="t" style="left:1441px;top:331px;width:64px;height:17px;line-height:17px;color:#000;letter-spacing:-0.12px"><span style="position:absolute;right:3px;top:0">-8625,00</span></div>
<div class="t" style="left:1506px;top:331px;width:64px;height:17px;line-height:17px;color:#000;letter-spacing:-0.12px"><span style="position:absolute;right:3px;top:0">-100,00%</span></div>
<div class="t" style="left:1571px;top:331px;width:70px;height:17px;line-height:17px;color:#000;letter-spacing:-0.12px"><span style="position:absolute;right:3px;top:0">0,00</span></div>
<div class="t" style="left:111px;top:349px;width:205px;height:17px;line-height:17px;text-align:left;color:#000;letter-spacing:-0.22px;">Delonghi ECAM26.455.BLB</div>
<div class="t" style="left:321px;top:349px;width:62px;height:17px;line-height:17px;text-align:left;color:#000;letter-spacing:-0.12px;">0132215146</div>
<div class="t" style="left:453px;top:349px;width:66px;height:17px;line-height:17px;text-align:left;color:#000;letter-spacing:-0.12px;">23.11.2016</div>
<div class="t" style="left:574px;top:349px;width:58px;height:17px;line-height:17px;color:#000;letter-spacing:-0.12px"><span style="position:absolute;right:3px;top:0">10</span></div>
<div class="t" style="left:633px;top:349px;width:47px;height:17px;line-height:17px;color:#000;letter-spacing:-0.12px"><span style="position:absolute;right:3px;top:0">0</span></div>
<div class="t" style="left:681px;top:349px;width:88px;height:17px;line-height:17px;color:#000;letter-spacing:-0.12px"><span style="position:absolute;right:3px;top:0">18333,33333</span></div>
<div class="t" style="left:770px;top:349px;width:64px;height:17px;line-height:17px;color:#000;letter-spacing:-0.12px"><span style="position:absolute;right:3px;top:0">3666,66667</span></div>
<div class="t" style="left:835px;top:349px;width:81px;height:17px;line-height:17px;color:#000;letter-spacing:-0.12px"><span style="position:absolute;right:3px;top:0">22000,00</span></div>
<div class="t" style="left:917px;top:349px;width:64px;height:17px;line-height:17px;color:#000;letter-spacing:-0.12px"><span style="position:absolute;right:3px;top:0">25,00</span></div>
<div class="t" style="left:982px;top:349px;width:70px;height:17px;line-height:17px;color:#000;letter-spacing:-0.12px"><span style="position:absolute;right:3px;top:0">220000,00</span></div>
<div class="t" style="left:1053px;top:349px;width:64px;height:17px;line-height:17px;color:#000;letter-spacing:-0.12px"><span style="position:absolute;right:3px;top:0">18333,33333</span></div>
<div class="t" style="left:1118px;top:349px;width:64px;height:17px;line-height:17px;color:#000;letter-spacing:-0.12px"><span style="position:absolute;right:3px;top:0">22000,00</span></div>
<div class="t" style="left:1218px;top:349px;width:80px;height:17px;line-height:17px;color:#000;letter-spacing:-0.12px"><span style="position:absolute;right:3px;top:0">213481,25</span></div>
<div class="t" style="left:1299px;top:349px;width:64px;height:17px;line-height:17px;color:#000;letter-spacing:-0.12px"><span style="position:absolute;right:3px;top:0">3274,88%</span></div>
<div class="t" style="left:1364px;top:349px;width:76px;height:17px;line-height:17px;color:#000;letter-spacing:-0.12px"><span style="position:absolute;right:3px;top:0">212177,50</span></div>
<div class="t" style="left:1441px;top:349px;width:64px;height:17px;line-height:17px;color:#000;letter-spacing:-0.12px"><span style="position:absolute;right:3px;top:0">-250,00</span></div>
<div class="t" style="left:1506px;top:349px;width:64px;height:17px;line-height:17px;color:#000;letter-spacing:-0.12px"><span style="position:absolute;right:3px;top:0">-100,00%</span></div>
<div class="t" style="left:1571px;top:349px;width:70px;height:17px;line-height:17px;color:#000;letter-spacing:-0.12px"><span style="position:absolute;right:3px;top:0">0,00</span></div>
<div style="left:5px;top:493px;width:1637px;height:1px;background:#C0C0C0;"></div>
<div style="left:17px;top:494px;width:1625px;height:17px;background:#F4F8FF;"></div>
<div style="left:17px;top:511px;width:1625px;height:1px;background:#C8C8D0;"></div>
<div style="left:33px;top:494px;width:1px;height:18px;background:#C0C0C0;"></div>
<div style="left:108px;top:494px;width:1px;height:18px;background:#C0C0C0;"></div>
<div style="left:318px;top:494px;width:1px;height:18px;background:#C0C0C0;"></div>
<div style="left:383px;top:494px;width:1px;height:18px;background:#C0C0C0;"></div>
<div style="left:450px;top:494px;width:1px;height:18px;background:#C0C0C0;"></div>
<div style="left:520px;top:494px;width:1px;height:18px;background:#C0C0C0;"></div>
<div style="left:573px;top:494px;width:1px;height:18px;background:#C0C0C0;"></div>
<div style="left:632px;top:494px;width:1px;height:18px;background:#C0C0C0;"></div>
<div style="left:680px;top:494px;width:1px;height:18px;background:#C0C0C0;"></div>
<div style="left:769px;top:494px;width:1px;height:18px;background:#C0C0C0;"></div>
<div style="left:834px;top:494px;width:1px;height:18px;background:#C0C0C0;"></div>
<div style="left:916px;top:494px;width:1px;height:18px;background:#C0C0C0;"></div>
<div style="left:981px;top:494px;width:1px;height:18px;background:#C0C0C0;"></div>
<div style="left:1052px;top:494px;width:1px;height:18px;background:#C0C0C0;"></div>
<div style="left:1117px;top:494px;width:1px;height:18px;background:#C0C0C0;"></div>
<div style="left:1182px;top:494px;width:1px;height:18px;background:#C0C0C0;"></div>
<div style="left:1217px;top:494px;width:1px;height:18px;background:#C0C0C0;"></div>
<div style="left:1298px;top:494px;width:1px;height:18px;background:#C0C0C0;"></div>
<div style="left:1363px;top:494px;width:1px;height:18px;background:#C0C0C0;"></div>
<div style="left:1440px;top:494px;width:1px;height:18px;background:#C0C0C0;"></div>
<div style="left:1505px;top:494px;width:1px;height:18px;background:#C0C0C0;"></div>
<div style="left:1570px;top:494px;width:1px;height:18px;background:#C0C0C0;"></div>
<div style="left:1641px;top:494px;width:1px;height:18px;background:#C0C0C0;"></div>
<div style="left:5px;top:494px;width:12px;height:18px;background:#EEEADF;border:1px solid #000;border-top:none;border-left:none;"></div>
<div class="t" style="left:574px;top:495px;width:58px;height:17px;line-height:17px;color:#000;letter-spacing:-0.12px"><span style="position:absolute;right:3px;top:0">125</span></div>
<div class="t" style="left:633px;top:495px;width:47px;height:17px;line-height:17px;color:#000;letter-spacing:-0.12px"><span style="position:absolute;right:3px;top:0">0</span></div>
<div class="t" style="left:681px;top:495px;width:88px;height:17px;line-height:17px;color:#000;letter-spacing:-0.12px"><span style="position:absolute;right:3px;top:0">2291666,66667</span></div>
<div class="t" style="left:770px;top:495px;width:64px;height:17px;line-height:17px;color:#000;letter-spacing:-0.12px"><span style="position:absolute;right:3px;top:0">458333,33333</span></div>
<div class="t" style="left:835px;top:495px;width:81px;height:17px;line-height:17px;color:#000;letter-spacing:-0.12px"><span style="position:absolute;right:3px;top:0">2750000,00</span></div>
<div class="t" style="left:917px;top:495px;width:64px;height:17px;line-height:17px;color:#000;letter-spacing:-0.12px"><span style="position:absolute;right:3px;top:0">8875,00</span></div>
<div class="t" style="left:982px;top:495px;width:70px;height:17px;line-height:17px;color:#000;letter-spacing:-0.12px"><span style="position:absolute;right:3px;top:0">2750000,00</span></div>
<div class="t" style="left:1053px;top:495px;width:64px;height:17px;line-height:17px;color:#000;letter-spacing:-0.12px"><span style="position:absolute;right:3px;top:0">2291666,66667</span></div>
<div class="t" style="left:1118px;top:495px;width:64px;height:17px;line-height:17px;color:#000;letter-spacing:-0.12px"><span style="position:absolute;right:3px;top:0">2750000,00</span></div>
<div class="t" style="left:1218px;top:495px;width:80px;height:17px;line-height:17px;color:#000;letter-spacing:-0.12px"><span style="position:absolute;right:3px;top:0">2606904,05952</span></div>
<div class="t" style="left:1299px;top:495px;width:64px;height:17px;line-height:17px;color:#000;letter-spacing:-0.12px"><span style="position:absolute;right:3px;top:0">0,00</span></div>
<div class="t" style="left:1364px;top:495px;width:76px;height:17px;line-height:17px;color:#000;letter-spacing:-0.12px"><span style="position:absolute;right:3px;top:0">2605600,30952</span></div>
<div class="t" style="left:1441px;top:495px;width:64px;height:17px;line-height:17px;color:#000;letter-spacing:-0.12px"><span style="position:absolute;right:3px;top:0">-8875,00</span></div>
<div class="t" style="left:1571px;top:495px;width:70px;height:17px;line-height:17px;color:#000;letter-spacing:-0.12px"><span style="position:absolute;right:3px;top:0">0,00</span></div>
<div style="left:1664px;top:296px;width:17px;height:216px;background:repeating-conic-gradient(#fff 0% 25%,#EEEADF 0% 50%) 0 0/2px 2px;"></div>
<div style="left:1664px;top:296px;width:17px;height:17px;background:#EEEADF;"></div>
<div style="left:1664px;top:296px;width:17px;height:1px;background:#EEEADF;"></div>
<div style="left:1664px;top:296px;width:1px;height:17px;background:#EEEADF;"></div>
<div style="left:1665px;top:297px;width:15px;height:1px;background:#FFFFFF;"></div>
<div style="left:1665px;top:297px;width:1px;height:15px;background:#FFFFFF;"></div>
<div style="left:1665px;top:311px;width:15px;height:1px;background:#ACA899;"></div>
<div style="left:1679px;top:297px;width:1px;height:15px;background:#ACA899;"></div>
<div style="left:1664px;top:312px;width:17px;height:1px;background:#716F64;"></div>
<div style="left:1680px;top:296px;width:1px;height:17px;background:#716F64;"></div>
<div style="left:1672px;top:302px;width:1px;height:1px;background:#000;"></div>
<div style="left:1671px;top:303px;width:3px;height:1px;background:#000;"></div>
<div style="left:1670px;top:304px;width:5px;height:1px;background:#000;"></div>
<div style="left:1669px;top:305px;width:7px;height:1px;background:#000;"></div>
<div style="left:1664px;top:313px;width:17px;height:121px;background:#EEEADF;"></div>
<div style="left:1664px;top:313px;width:17px;height:1px;background:#EEEADF;"></div>
<div style="left:1664px;top:313px;width:1px;height:121px;background:#EEEADF;"></div>
<div style="left:1665px;top:314px;width:15px;height:1px;background:#FFFFFF;"></div>
<div style="left:1665px;top:314px;width:1px;height:119px;background:#FFFFFF;"></div>
<div style="left:1665px;top:432px;width:15px;height:1px;background:#ACA899;"></div>
<div style="left:1679px;top:314px;width:1px;height:119px;background:#ACA899;"></div>
<div style="left:1664px;top:433px;width:17px;height:1px;background:#716F64;"></div>
<div style="left:1680px;top:313px;width:1px;height:121px;background:#716F64;"></div>
<div style="left:1664px;top:495px;width:17px;height:17px;background:#EEEADF;"></div>
<div style="left:1664px;top:495px;width:17px;height:1px;background:#EEEADF;"></div>
<div style="left:1664px;top:495px;width:1px;height:17px;background:#EEEADF;"></div>
<div style="left:1665px;top:496px;width:15px;height:1px;background:#FFFFFF;"></div>
<div style="left:1665px;top:496px;width:1px;height:15px;background:#FFFFFF;"></div>
<div style="left:1665px;top:510px;width:15px;height:1px;background:#ACA899;"></div>
<div style="left:1679px;top:496px;width:1px;height:15px;background:#ACA899;"></div>
<div style="left:1664px;top:511px;width:17px;height:1px;background:#716F64;"></div>
<div style="left:1680px;top:495px;width:1px;height:17px;background:#716F64;"></div>
<div style="left:1669px;top:502px;width:7px;height:1px;background:#000;"></div>
<div style="left:1670px;top:503px;width:5px;height:1px;background:#000;"></div>
<div style="left:1671px;top:504px;width:3px;height:1px;background:#000;"></div>
<div style="left:1672px;top:505px;width:1px;height:1px;background:#000;"></div>
<div style="left:913px;top:328px;width:69px;height:41px;border:2px solid #FF0000;border-radius:6px;"></div>
<div style="left:1217px;top:292px;width:355px;height:74px;border:2px solid #FF0000;border-radius:6px;"></div>
<div style="left:0px;top:516px;width:1685px;height:1px;background:#ACA899;"></div>
<div style="left:0px;top:517px;width:1687px;height:1px;background:#716F64;"></div>
<div style="left:3px;top:520px;width:249px;height:21px;background:#fff;"></div>
<div style="left:3px;top:520px;width:249px;height:1px;background:#ACA899;"></div>
<div style="left:3px;top:520px;width:1px;height:21px;background:#ACA899;"></div>
<div style="left:4px;top:521px;width:247px;height:1px;background:#716F64;"></div>
<div style="left:4px;top:521px;width:1px;height:19px;background:#716F64;"></div>
<div style="left:3px;top:540px;width:249px;height:1px;background:#FFFFFF;"></div>
<div style="left:251px;top:520px;width:1px;height:21px;background:#FFFFFF;"></div>
<div style="left:4px;top:539px;width:247px;height:1px;background:#EEEADF;"></div>
<div style="left:250px;top:521px;width:1px;height:19px;background:#EEEADF;"></div>
<div style="left:233px;top:522px;width:17px;height:17px;background:#EEEADF;"></div>
<div style="left:233px;top:522px;width:17px;height:1px;background:#EEEADF;"></div>
<div style="left:233px;top:522px;width:1px;height:17px;background:#EEEADF;"></div>
<div style="left:234px;top:523px;width:15px;height:1px;background:#FFFFFF;"></div>
<div style="left:234px;top:523px;width:1px;height:15px;background:#FFFFFF;"></div>
<div style="left:234px;top:537px;width:15px;height:1px;background:#ACA899;"></div>
<div style="left:248px;top:523px;width:1px;height:15px;background:#ACA899;"></div>
<div style="left:233px;top:538px;width:17px;height:1px;background:#716F64;"></div>
<div style="left:249px;top:522px;width:1px;height:17px;background:#716F64;"></div>
<div style="left:238px;top:529px;width:7px;height:1px;background:#000;"></div>
<div style="left:239px;top:530px;width:5px;height:1px;background:#000;"></div>
<div style="left:240px;top:531px;width:3px;height:1px;background:#000;"></div>
<div style="left:241px;top:532px;width:1px;height:1px;background:#000;"></div>
<div class="t" style="left:7px;top:523px;width:200px;height:16px;line-height:16px;text-align:left;color:#000;">&lt; Все группы &gt;</div>
<div class="t" style="left:502px;top:523px;width:100px;height:16px;line-height:16px;text-align:left;color:#000;">Init: 0,297 сек.</div>
<svg width="0" height="0"><defs>
<linearGradient id="cb" x1="0" y1="0" x2="1" y2="0"><stop offset="0" stop-color="#1890E0"/><stop offset="0.5" stop-color="#30D4FF"/><stop offset="1" stop-color="#1480D0"/></linearGradient>
<linearGradient id="cb2" x1="0" y1="0" x2="0" y2="1"><stop offset="0" stop-color="#A8D0F8"/><stop offset="0.35" stop-color="#30C8FF"/><stop offset="1" stop-color="#108CE8"/></linearGradient>
<linearGradient id="dc" x1="0" y1="0" x2="1" y2="1"><stop offset="0" stop-color="#E0F6FF"/><stop offset="1" stop-color="#58B8FA"/></linearGradient>
<linearGradient id="gd" x1="0" y1="0" x2="0" y2="1"><stop offset="0" stop-color="#FFD050"/><stop offset="1" stop-color="#D88000"/></linearGradient>
<g id="doc"><rect x="0" y="0" width="7.5" height="8.2" fill="url(#dc)" stroke="#2A86E8" stroke-width="1"/><path d="M2 2.6 H5.6 M2 4.4 H5.6 M2 6.2 H5.6" stroke="#F0FAFF" stroke-width="0.8"/></g>
<g id="gold"><rect x="0" y="0" width="6.2" height="2.7" fill="url(#gd)" stroke="#B86800" stroke-width="0.7"/><rect x="1.5" y="1" width="3" height="0.9" fill="#FFF0A0"/></g>
</defs></svg>
<svg style="left:262px;top:524px" width="17" height="17" viewBox="0 0 17 17"><rect x="0" y="0" width="4" height="14" fill="url(#cb)" stroke="#1070C0" stroke-width="0.6"/><rect x="0" y="11.4" width="4" height="2.6" fill="#F4A010"/><rect x="1.4" y="12.200000000000001" width="1.2" height="1" fill="#FFE080"/><path d="M5.5 5.5 L7.5 0.5 H15.5 V7" fill="#FBE4CC" stroke="#C46408" stroke-width="1"/><path d="M5 12.5 H16" stroke="#E8900C" stroke-width="1.4" stroke-dasharray="1 1"/><g transform="translate(7,5) rotate(-12)"><use href="#doc"/></g><rect x="8.8" y="10.2" width="3.4" height="5.4" rx="1.4" fill="#fff" stroke="#D04410" stroke-width="1.2"/></svg>
<svg style="left:287px;top:524px" width="17" height="17" viewBox="0 0 17 17"><rect x="0" y="0" width="4" height="14" fill="url(#cb)" stroke="#1070C0" stroke-width="0.6"/><rect x="0" y="4.4" width="4" height="2.6" fill="#F4A010"/><rect x="1.4" y="5.2" width="1.2" height="1" fill="#FFE080"/><path d="M5.5 3.5 L7.5 0.5 H15.5 V3.5" fill="#F4B070" stroke="#C46408" stroke-width="1"/><path d="M5 4.6 H16" stroke="#E8900C" stroke-width="1.2" stroke-dasharray="1 1"/><path d="M4.5 6.5 H16" stroke="#E89A10" stroke-width="1"/><g transform="translate(6.5,8) rotate(-12)"><use href="#doc"/></g></svg>
<svg style="left:312px;top:524px" width="17" height="17" viewBox="0 0 17 17"><rect x="0" y="0" width="4" height="14" fill="url(#cb)" stroke="#1070C0" stroke-width="0.6"/><rect x="0" y="0" width="4" height="2.6" fill="#F4A010"/><rect x="1.4" y="0.8" width="1.2" height="1" fill="#FFE080"/><path d="M4 0.7 H16" stroke="#E8900C" stroke-width="1.4"/><path d="M5 2.6 H16" stroke="#E8900C" stroke-width="1.2" stroke-dasharray="1 1"/><path d="M15.5 3 V8" stroke="#E8B080" stroke-width="1"/><g transform="translate(6,5.5) rotate(-12)"><use href="#doc"/></g></svg>
<svg style="left:337px;top:524px" width="17" height="17" viewBox="0 0 17 17"><rect x="0" y="0" width="4" height="14" fill="url(#cb)" stroke="#1070C0" stroke-width="0.6"/><rect x="0" y="6.6" width="4" height="2.6" fill="#F4A010"/><rect x="1.4" y="7.3999999999999995" width="1.2" height="1" fill="#FFE080"/><rect x="5" y="0" width="4" height="10.5" fill="url(#cb2)" stroke="#1070C0" stroke-width="0.6"/><rect x="5" y="3.2" width="4" height="2.6" fill="#F4A010"/><rect x="6.4" y="4.0" width="1.2" height="1" fill="#FFE080"/><rect x="10" y="0" width="4" height="10.5" fill="url(#cb2)" stroke="#1070C0" stroke-width="0.6"/><rect x="10" y="4.2" width="4" height="2.6" fill="#F4A010"/><rect x="11.4" y="5.0" width="1.2" height="1" fill="#FFE080"/><use href="#gold" x="7.5" y="10.3"/><use href="#gold" x="4.5" y="13.3"/><use href="#gold" x="11.8" y="12.3" /></svg>
<svg style="left:362px;top:524px" width="17" height="17" viewBox="0 0 17 17"><rect x="9.5" y="1.5" width="6.5" height="9.5" fill="#F4FFF0" stroke="#2EA018" stroke-width="1.2"/><path d="M12 4.5 h2 M12 6.5 h2 M12 8.5 h2" stroke="#50B830" stroke-width="0.8"/><g transform="translate(3.5,0.3) rotate(24)"><use href="#doc"/></g><rect x="5" y="8" width="5" height="4" fill="#B8C8F4" opacity="0.9"/><use href="#gold" x="7" y="10.3"/><use href="#gold" x="4" y="13.3"/><use href="#gold" x="11.5" y="12.3"/></svg>
<svg style="left:387px;top:524px" width="17" height="17" viewBox="0 0 17 17"><rect x="1" y="1" width="4" height="14" fill="url(#cb2)" stroke="#1070C0" stroke-width="0.6"/><rect x="1" y="7.2" width="4" height="2.6" fill="#F4A010"/><rect x="2.4" y="8.0" width="1.2" height="1" fill="#FFE080"/><rect x="6" y="1" width="4" height="14" fill="url(#cb2)" stroke="#1070C0" stroke-width="0.6"/><rect x="6" y="4.2" width="4" height="2.6" fill="#F4A010"/><rect x="7.4" y="5.0" width="1.2" height="1" fill="#FFE080"/><rect x="11" y="1" width="4" height="14" fill="url(#cb2)" stroke="#1070C0" stroke-width="0.6"/><rect x="11" y="5.2" width="4" height="2.6" fill="#F4A010"/><rect x="12.4" y="6.0" width="1.2" height="1" fill="#FFE080"/></svg>
<svg style="left:412px;top:524px" width="17" height="17" viewBox="0 0 17 17"><rect x="9.5" y="1.5" width="6.5" height="9.5" fill="#F4FFF0" stroke="#2EA018" stroke-width="1.2"/><path d="M12 4.5 h2 M12 6.5 h2" stroke="#50B830" stroke-width="0.8"/><g transform="translate(4.5,8.5) rotate(-14)"><rect x="0" y="0" width="7.5" height="6.5" fill="#88A8F0" stroke="#3458C8" stroke-width="1"/></g><g transform="translate(3.5,0.3) rotate(24)"><use href="#doc"/></g></svg>
<svg style="left:437px;top:524px" width="17" height="17" viewBox="0 0 17 17"><path d="M0.5 11 V4 L4 0.5 H13 V5" fill="#FBE4CC" stroke="#C8680C" stroke-width="1.1"/><path d="M0.5 4 H9 L13 0.5" fill="none" stroke="#C8680C" stroke-width="0.9"/><rect x="3.3" y="5.3" width="12" height="10" rx="1.8" fill="#E8F6FF" stroke="#1484B4" stroke-width="1.6"/><rect x="5.3" y="7" width="8" height="2.2" fill="#80F080" stroke="#10406C" stroke-width="0.6"/><path d="M5.5 11.2 H13.5 M5.5 13.2 H13.5" stroke="#2C3C8C" stroke-width="1" stroke-dasharray="1 1"/></svg>
<div style="left:1511px;top:518px;width:85px;height:25px;background:#EEEADF;"></div>
<div style="left:1511px;top:518px;width:85px;height:1px;background:#FFFFFF;"></div>
<div style="left:1511px;top:518px;width:1px;height:25px;background:#FFFFFF;"></div>
<div style="left:1512px;top:519px;width:83px;height:1px;background:#EEEADF;"></div>
<div style="left:1512px;top:519px;width:1px;height:23px;background:#EEEADF;"></div>
<div style="left:1512px;top:541px;width:83px;height:1px;background:#ACA899;"></div>
<div style="left:1594px;top:519px;width:1px;height:23px;background:#ACA899;"></div>
<div style="left:1511px;top:542px;width:85px;height:1px;background:#716F64;"></div>
<div style="left:1595px;top:518px;width:1px;height:25px;background:#716F64;"></div>
<svg style="left:1515px;top:523px" width="13" height="14" viewBox="0 0 13 14"><path d="M1 8.6 L2.6 7.6 L4.8 10.2 L9.2 1 L11.2 1 L5.8 13.2 L4.2 13.2Z" fill="#5AAA1A" stroke="#3E8C0A" stroke-width="0.5"/></svg>
<div class="t" style="left:1536px;top:522px;width:60px;height:16px;line-height:16px;text-align:left;color:#000;letter-spacing:-0.2px;">Сохранить</div>
<div style="left:1602px;top:518px;width:85px;height:25px;background:#EEEADF;"></div>
<div style="left:1602px;top:518px;width:85px;height:1px;background:#FFFFFF;"></div>
<div style="left:1602px;top:518px;width:1px;height:25px;background:#FFFFFF;"></div>
<div style="left:1603px;top:519px;width:83px;height:1px;background:#EEEADF;"></div>
<div style="left:1603px;top:519px;width:1px;height:23px;background:#EEEADF;"></div>
<div style="left:1603px;top:541px;width:83px;height:1px;background:#ACA899;"></div>
<div style="left:1685px;top:519px;width:1px;height:23px;background:#ACA899;"></div>
<div style="left:1602px;top:542px;width:85px;height:1px;background:#716F64;"></div>
<div style="left:1686px;top:518px;width:1px;height:25px;background:#716F64;"></div>
<svg style="left:1606px;top:523px" width="12" height="12" viewBox="0 0 12 12"><path d="M2.8 3 L9.4 9.6 M9.4 3 L2.8 9.6" stroke="#D04418" stroke-width="3.1" stroke-linecap="round"/><path d="M3 3.2 L9.2 9.4 M9.2 3.2 L3 9.4" stroke="#F07030" stroke-width="1.5" stroke-linecap="round"/></svg>
<div class="t" style="left:1624px;top:522px;width:60px;height:16px;line-height:16px;text-align:left;color:#000;letter-spacing:-0.1px;">Отменить</div>
<div style="left:1687px;top:0px;width:1px;height:545px;background:#EEEADF;"></div>
<div style="left:0px;top:544px;width:1688px;height:1px;background:#D6D4CD;"></div>
</div></body></html>
